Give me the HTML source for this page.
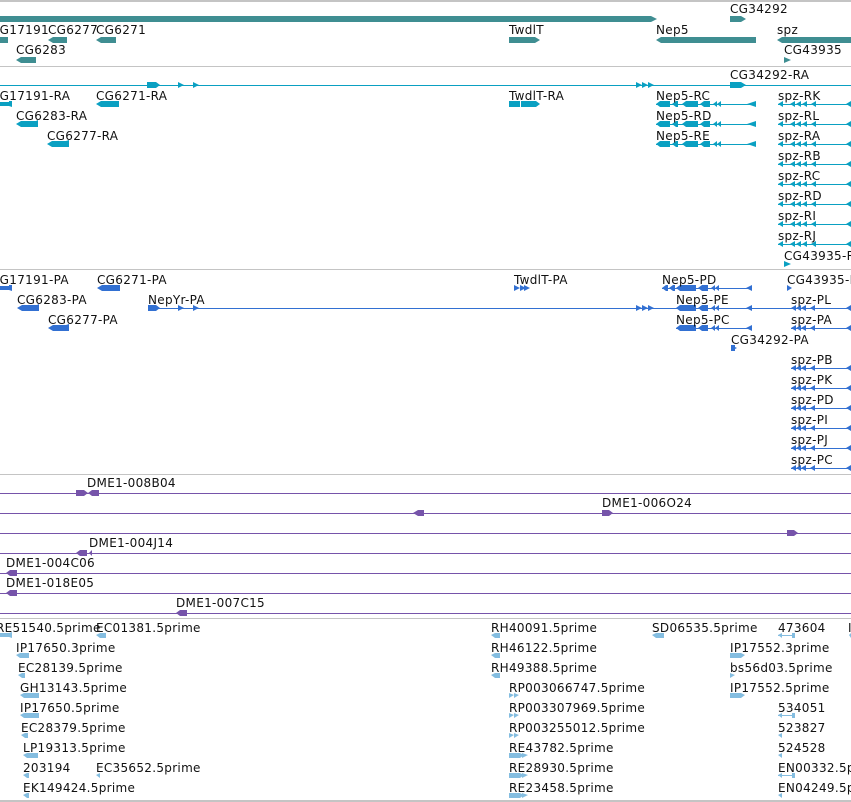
<!DOCTYPE html>
<html><head><meta charset="utf-8"><style>
html,body{margin:0;padding:0;background:#fff;width:851px;height:802px;overflow:hidden}
svg{display:block}
text{font-family:"DejaVu Sans","Liberation Sans",sans-serif;font-size:12px;fill:#111;letter-spacing:0.3px}
</style></head><body>
<svg width="851" height="802" viewBox="0 0 851 802" xmlns="http://www.w3.org/2000/svg">
<g fill="#c4c4c4">
<rect x="0" y="0" width="851" height="2"/><rect x="0" y="66" width="851" height="1"/>
<rect x="0" y="269" width="851" height="1"/><rect x="0" y="474" width="851" height="1"/>
<rect x="0" y="618" width="851" height="1"/><rect x="0" y="800" width="851" height="2"/>
</g>

<g fill="#3f8e92">
<polygon points="0,16 651,16 657,19 651,22 0,22"/>
<polygon points="730,16 741,16 746,19 741,22 730,22"/>
<rect x="0" y="37" width="8" height="6"/>
<polygon points="48,40 53,37 67,37 67,43 53,43"/>
<polygon points="96,40 101,37 116,37 116,43 101,43"/>
<polygon points="509,37 535,37 540,40 535,43 509,43"/>
<polygon points="656,40 661,37 756,37 756,43 661,43"/>
<polygon points="777,40 782,37 851,37 851,43 782,43"/>
<polygon points="16,60 21,57 36,57 36,63 21,63"/>
<polygon points="784,57 791,60 784,63"/>
</g>
<text x="730" y="13">CG34292</text>
<text x="-9" y="34">CG17191</text><text x="48" y="34">CG6277</text><text x="96" y="34">CG6271</text>
<text x="509" y="34">TwdlT</text><text x="656" y="34">Nep5</text><text x="777" y="34">spz</text>
<text x="16" y="54">CG6283</text><text x="784" y="54">CG43935</text>

<g fill="#0aa0c2" stroke="none">
<rect x="0" y="85" width="851" height="1"/>
<polygon points="147,82 156,82 160,85 156,88 147,88"/>
<polygon points="178,82 184,85 178,88"/><polygon points="193,82 199,85 193,88"/>
<polygon points="636,82 642,85 636,88"/><polygon points="642,82 648,85 642,88"/><polygon points="648,82 654,85 648,88"/>
<polygon points="730,82 741,82 746,85 741,88 730,88"/>
<polygon points="0,102 9,102 9,101 12,101 12,107 9,106 0,106"/>
<polygon points="96,104 101,101 119,101 119,107 101,107"/>
<polygon points="509,101 520,101 520,107 509,107"/><polygon points="521,101 536,101 540,104 536,107 521,107"/>
<g id="nep5">
<rect x="656" y="104" width="100" height="1"/>
<polygon points="656,104 660,101 670,101 670,107 660,107"/>
<polygon points="672,104 676,101 678,101 678,107 676,107"/>
<polygon points="682,104 686,101 698,101 698,107 686,107"/>
<polygon points="700,104 704,101 710,101 710,107 704,107"/>
<polygon points="713,104 717,101 717,107"/><polygon points="717,104 721,101 721,107"/>
<polygon points="747,104 756,101 756,107"/>
</g>
<use href="#nep5" y="20"/><use href="#nep5" y="40"/>
<g id="spz">
<rect x="778" y="104" width="73" height="1"/>
<polygon points="778,104 783,101 783,107"/>
<polygon points="790,104 795,101 795,107"/><polygon points="796,104 801,101 801,107"/>
<polygon points="802,104 807,101 807,107"/>
<polygon points="811,104 816,101 816,107"/>
<polygon points="846,104 851,101 851,107"/>
</g>
<use href="#spz" y="20"/><use href="#spz" y="40"/><use href="#spz" y="60"/><use href="#spz" y="80"/>
<use href="#spz" y="100"/><use href="#spz" y="120"/><use href="#spz" y="140"/>
<polygon points="16,124 21,121 36,121 36,121 38,120 38,127 36,127 21,127"/>
<polygon points="47,144 52,141 66,141 69,140 69,147 66,147 52,147"/>
<polygon points="784,261 791,264 784,267"/>
</g>
<text x="730" y="79">CG34292-RA</text>
<text x="-9" y="100">CG17191-RA</text><text x="96" y="100">CG6271-RA</text><text x="509" y="100">TwdlT-RA</text>
<text x="656" y="100">Nep5-RC</text><text x="778" y="100">spz-RK</text>
<text x="16" y="120">CG6283-RA</text><text x="656" y="120">Nep5-RD</text><text x="778" y="120">spz-RL</text>
<text x="47" y="140">CG6277-RA</text><text x="656" y="140">Nep5-RE</text><text x="778" y="140">spz-RA</text>
<text x="778" y="160">spz-RB</text><text x="778" y="180">spz-RC</text><text x="778" y="200">spz-RD</text>
<text x="778" y="220">spz-RI</text><text x="778" y="240">spz-RJ</text><text x="784" y="260">CG43935-RA</text>

<g fill="#3270d2">
<polygon points="0,286 9,286 9,285 12,285 12,291 9,290 0,290"/>
<polygon points="97,288 102,285 120,285 120,291 102,291"/>
<polygon points="514,285 520,288 514,291"/><polygon points="520,285 526,288 520,291"/><polygon points="524,285 530,288 524,291"/>
<g id="nepP">
<rect x="662" y="288" width="90" height="1"/>
<polygon points="662,288 666,285 668,285 668,291 666,291"/>
<polygon points="669,288 673,285 675,285 675,291 673,291"/>
<polygon points="676,288 680,285 696,285 696,291 680,291"/>
<polygon points="698,288 702,285 708,285 708,291 702,291"/>
<polygon points="711,288 715,285 715,291"/><polygon points="715,288 719,285 719,291"/>
<polygon points="746,288 752,285 752,291"/>
</g>
<g id="nepP2">
<rect x="676" y="308" width="76" height="1"/>
<polygon points="676,308 680,305 696,305 696,311 680,311"/>
<polygon points="698,308 702,305 708,305 708,311 702,311"/>
<polygon points="711,308 715,305 715,311"/><polygon points="715,308 719,305 719,311"/>
<polygon points="746,308 752,305 752,311"/>
</g>
<use href="#nepP2" y="20"/>
<polygon points="787,285 792,288 787,291"/>
<polygon points="17,308 22,305 37,305 39,304 39,311 37,311 22,311"/>
<rect x="148" y="308" width="703" height="1"/>
<polygon points="148,305 156,305 160,308 156,311 148,311"/>
<polygon points="178,305 184,308 178,311"/><polygon points="193,305 199,308 193,311"/>
<polygon points="636,305 642,308 636,311"/><polygon points="642,305 648,308 642,311"/><polygon points="648,305 654,308 648,311"/>
<polygon points="48,328 53,325 66,325 69,324 69,331 66,331 53,331"/>
<polygon points="731,345 737,348 731,351"/><rect x="731" y="345" width="4" height="6"/>
<g id="spzP">
<rect x="791" y="308" width="60" height="1"/>
<polygon points="791,308 796,305 796,311"/><polygon points="796,308 801,305 801,311"/>
<polygon points="801,308 806,305 806,311"/>
<polygon points="810,308 815,305 815,311"/>
<polygon points="846,308 851,305 851,311"/>
</g>
<use href="#spzP" y="20"/><use href="#spzP" y="60"/><use href="#spzP" y="80"/><use href="#spzP" y="100"/>
<use href="#spzP" y="120"/><use href="#spzP" y="140"/><use href="#spzP" y="160"/>
</g>
<text x="-9" y="284">CG17191-PA</text><text x="97" y="284">CG6271-PA</text><text x="514" y="284">TwdlT-PA</text>
<text x="662" y="284">Nep5-PD</text><text x="787" y="284">CG43935-PA</text>
<text x="17" y="304">CG6283-PA</text><text x="148" y="304">NepYr-PA</text><text x="676" y="304">Nep5-PE</text><text x="791" y="304">spz-PL</text>
<text x="48" y="324">CG6277-PA</text><text x="676" y="324">Nep5-PC</text><text x="791" y="324">spz-PA</text>
<text x="731" y="344">CG34292-PA</text>
<text x="791" y="364">spz-PB</text><text x="791" y="384">spz-PK</text><text x="791" y="404">spz-PD</text>
<text x="791" y="424">spz-PI</text><text x="791" y="444">spz-PJ</text><text x="791" y="464">spz-PC</text>

<g fill="#7654aa">
<rect x="0" y="493" width="851" height="1"/><rect x="0" y="513" width="851" height="1"/>
<rect x="0" y="533" width="851" height="1"/><rect x="0" y="553" width="851" height="1"/>
<rect x="0" y="573" width="851" height="1"/><rect x="0" y="593" width="851" height="1"/>
<rect x="0" y="613" width="851" height="1"/>
<polygon points="76,490 84,490 88,493 84,496 76,496"/><polygon points="88,493 92,490 99,490 99,496 92,496"/>
<polygon points="413,513 418,510 424,510 424,516 418,516"/>
<polygon points="602,510 609,510 613,513 609,516 602,516"/>
<polygon points="787,530 794,530 798,533 794,536 787,536"/>
<polygon points="76,553 80,550 87,550 87,556 80,556"/><polygon points="89,553 92,550 92,556"/>
<polygon points="6,573 10,570 17,570 17,576 10,576"/>
<polygon points="6,593 10,590 17,590 17,596 10,596"/>
<polygon points="176,613 180,610 187,610 187,616 180,616"/>
</g>
<text x="87" y="487">DME1-008B04</text><text x="602" y="507">DME1-006O24</text>
<text x="89" y="547">DME1-004J14</text><text x="6" y="567">DME1-004C06</text>
<text x="6" y="587">DME1-018E05</text><text x="176" y="607">DME1-007C15</text>

<g fill="#84bde0">
<polygon points="0,633 9,633 12,632 12,638 9,637 0,637"/>
<polygon points="96,635 100,633 106,633 106,638 100,638"/>
<polygon points="491,635 495,633 500,633 500,638 495,638"/>
<polygon points="652,635 656,633 664,633 664,638 656,638"/>
<rect x="778" y="635" width="16" height="1"/><polygon points="778,635 782,633 782,638"/><rect x="792" y="633" width="3" height="5"/>
<polygon points="849,635 851,633 851,638"/>
<polygon points="16,655 20,653 29,653 29,658 20,658"/>
<polygon points="491,655 495,653 500,653 500,658 495,658"/>
<polygon points="730,653 741,653 745,655 741,658 730,658"/>
<polygon points="18,675 22,673 25,673 25,678 22,678"/>
<polygon points="491,675 495,673 500,673 500,678 495,678"/>
<polygon points="730,673 735,675 730,678"/>
<polygon points="20,695 24,693 39,693 39,698 24,698"/>
<polygon points="509,693 514,695 509,698"/><polygon points="514,693 519,695 514,698"/>
<polygon points="730,693 741,693 745,695 741,698 730,698"/>
<polygon points="20,715 24,713 39,713 39,718 24,718"/>
<polygon points="509,713 514,715 509,718"/><polygon points="514,713 519,715 514,718"/>
<rect x="778" y="715" width="16" height="1"/><polygon points="778,715 782,713 782,718"/><rect x="792" y="713" width="3" height="5"/>
<polygon points="21,735 25,733 28,733 28,738 25,738"/>
<polygon points="509,733 514,735 509,738"/><polygon points="514,733 519,735 514,738"/>
<polygon points="778,735 782,733 782,738"/>
<polygon points="23,755 27,753 38,753 38,758 27,758"/>
<polygon points="509,753 520,753 524,755 520,758 509,758"/><polygon points="522,753 528,755 522,758"/>
<polygon points="778,755 782,753 782,758"/>
<polygon points="23,775 27,773 29,773 29,778 27,778"/>
<polygon points="96,775 100,773 100,778"/>
<polygon points="509,773 520,773 524,775 520,778 509,778"/><polygon points="522,773 528,775 522,778"/>
<rect x="778" y="775" width="16" height="1"/><polygon points="778,775 782,773 782,778"/><rect x="792" y="773" width="3" height="5"/>
<polygon points="23,795 27,793 29,793 29,798 27,798"/>
<polygon points="509,793 520,793 524,795 520,798 509,798"/><polygon points="522,793 528,795 522,798"/>
<polygon points="778,795 782,793 782,798"/>
</g>
<text x="-4" y="632">RE51540.5prime</text><text x="96" y="632">EC01381.5prime</text>
<text x="491" y="632">RH40091.5prime</text><text x="652" y="632">SD06535.5prime</text>
<text x="778" y="632">473604</text><text x="848" y="632">I</text>
<text x="16" y="652">IP17650.3prime</text><text x="491" y="652">RH46122.5prime</text><text x="730" y="652">IP17552.3prime</text>
<text x="18" y="672">EC28139.5prime</text><text x="491" y="672">RH49388.5prime</text><text x="730" y="672">bs56d03.5prime</text>
<text x="20" y="692">GH13143.5prime</text><text x="509" y="692">RP003066747.5prime</text><text x="730" y="692">IP17552.5prime</text>
<text x="20" y="712">IP17650.5prime</text><text x="509" y="712">RP003307969.5prime</text><text x="778" y="712">534051</text>
<text x="21" y="732">EC28379.5prime</text><text x="509" y="732">RP003255012.5prime</text><text x="778" y="732">523827</text>
<text x="23" y="752">LP19313.5prime</text><text x="509" y="752">RE43782.5prime</text><text x="778" y="752">524528</text>
<text x="23" y="772">203194</text><text x="96" y="772">EC35652.5prime</text><text x="509" y="772">RE28930.5prime</text><text x="778" y="772">EN00332.5prime</text>
<text x="23" y="792">EK149424.5prime</text><text x="509" y="792">RE23458.5prime</text><text x="778" y="792">EN04249.5prime</text>
</svg>
</body></html>
